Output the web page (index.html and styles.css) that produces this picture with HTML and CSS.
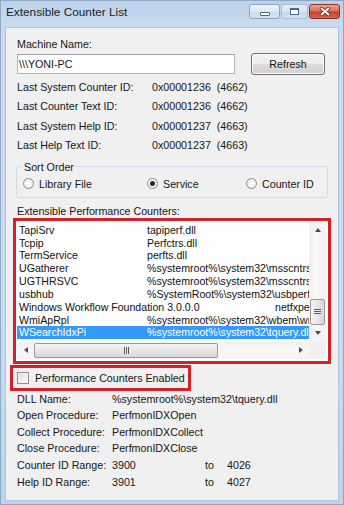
FILE: index.html
```html
<!DOCTYPE html>
<html>
<head>
<meta charset="utf-8">
<title>Extensible Counter List</title>
<link rel="stylesheet" href="styles.css">
</head>
<body>
<div class="window">
  <div class="titlebar">
    <span class="title">Extensible Counter List</span>
    <div class="caption">
      <span class="cbtn cmin"><span class="min-glyph"></span></span>
      <span class="cbtn cmax"><span class="max-glyph"></span></span>
      <span class="cbtn cclose"><svg width="12" height="9" viewBox="0 0 12 9"><path d="M2.5 1.5 L9.5 7.5 M9.5 1.5 L2.5 7.5" stroke="#5a1a12" stroke-width="3.4" stroke-linecap="round"/><path d="M2.5 1.5 L9.5 7.5 M9.5 1.5 L2.5 7.5" stroke="#fff" stroke-width="2" stroke-linecap="round"/></svg></span>
    </div>
  </div>
  <div class="client">
    <div class="lbl-top">Machine Name:</div>
    <div class="machine-row">
      <div class="textbox">\\\YONI-PC</div>
      <div class="button">Refresh</div>
    </div>
    <div class="ids">
      <span>Last System Counter ID:</span><span class="val">0x00001236  (4662)</span>
      <span>Last Counter Text ID:</span><span class="val">0x00001236  (4662)</span>
      <span>Last System Help ID:</span><span class="val">0x00001237  (4663)</span>
      <span>Last Help Text ID:</span><span class="val">0x00001237  (4663)</span>
    </div>
    <fieldset class="group">
      <legend>Sort Order</legend>
      <div class="radios">
        <span class="radio"><span class="rcircle"></span>Library File</span>
        <span class="radio"><span class="rcircle checked"></span>Service</span>
        <span class="radio"><span class="rcircle"></span>Counter ID</span>
      </div>
    </fieldset>
    <div class="lbl-list">Extensible Performance Counters:</div>
    <div class="list-red">
      <div class="listbox">
        <div class="list-main">
          <div class="rows">
            <div class="row">TapiSrv&#9;tapiperf.dll</div>
            <div class="row">Tcpip&#9;Perfctrs.dll</div>
            <div class="row">TermService&#9;perfts.dll</div>
            <div class="row">UGatherer&#9;%systemroot%\system32\msscntrs.dll</div>
            <div class="row">UGTHRSVC&#9;%systemroot%\system32\msscntrs.dll</div>
            <div class="row">usbhub&#9;%SystemRoot%\system32\usbperf.dll</div>
            <div class="row">Windows Workflow Foundation 3.0.0.0&#9;netfxperf.dll</div>
            <div class="row">WmiApRpl&#9;%systemroot%\system32\wbem\wmiaprpl.dll</div>
            <div class="row sel">WSearchIdxPi&#9;%systemroot%\system32\tquery.dll</div>
          </div>
          <div class="vscroll">
            <span class="sbtn"><span class="tri-up"></span></span>
            <span class="vtrack"><span class="vthumb"><span class="grip-v"></span></span></span>
            <span class="sbtn"><span class="tri-down"></span></span>
          </div>
        </div>
        <div class="hscroll-row">
          <div class="hscroll">
            <span class="sbtn"><span class="tri-left"></span></span>
            <span class="htrack"><span class="hthumb"><span class="grip-h"></span></span></span>
            <span class="sbtn"><span class="tri-right"></span></span>
          </div>
          <div class="corner"></div>
        </div>
      </div>
    </div>
    <div class="check-red">
      <span class="checkbox"></span><span>Performance Counters Enabled</span>
    </div>
    <div class="details">
      <span>DLL Name:</span><span class="span3">%systemroot%\system32\tquery.dll</span>
      <span>Open Procedure:</span><span class="span3">PerfmonIDXOpen</span>
      <span>Collect Procedure:</span><span class="span3">PerfmonIDXCollect</span>
      <span>Close Procedure:</span><span class="span3">PerfmonIDXClose</span>
      <span>Counter ID Range:</span><span>3900</span><span>to</span><span>4026</span>
      <span>Help ID Range:</span><span>3901</span><span>to</span><span>4027</span>
    </div>
  </div>
</div>
</body>
</html>
```

FILE: styles.css
```css
* { box-sizing: border-box; }
html, body { margin: 0; padding: 0; }
body {
  width: 344px;
  height: 505px;
  overflow: hidden;
  font-family: "Liberation Sans", Arial, sans-serif;
  font-size: 10.7px;
  color: #161616;
  background: #ffffff;
}
.window {
  width: 344px;
  height: 505px;
  display: flex;
  flex-direction: column;
  border: 1px solid #8ea9c6;
  background: linear-gradient(to bottom, #bcd1e9 0, #cadcf0 26px, #c9dbef 60%, #bfd4ea 100%);
}
.titlebar {
  height: 26px;
  display: flex;
  align-items: flex-start;
  flex: none;
}
.title {
  margin-top: 4px;
  padding-left: 5px;
  font-size: 11.8px;
  line-height: 14px;
  color: #141c26;
}
.caption {
  margin-left: auto;
  margin-top: 3px;
  padding-right: 3px;
  display: flex;
  gap: 1px;
}
.cbtn {
  height: 15px;
  display: flex;
  align-items: center;
  justify-content: center;
  border-radius: 3px;
}
.cmin {
  width: 31px;
  border: 1px solid #8fa3bd;
  background: linear-gradient(to bottom, #eef4fb 0, #dce7f4 50%, #cbdbee 51%, #d6e4f3 100%);
  align-items: flex-end;
  padding-bottom: 2px;
}
.min-glyph {
  width: 10px;
  height: 4px;
  background: #ffffff;
  border: 1px solid #4f6580;
  border-radius: 1px;
}
.cmax {
  width: 27px;
  border: 1px solid #a9bdd5;
  background: linear-gradient(to bottom, #e6eef8 0, #d6e3f2 50%, #c8d9ee 51%, #d2e0f1 100%);
}
.max-glyph {
  width: 9px;
  height: 7px;
  border: 1px solid #4f6580;
  border-top-width: 2px;
  background: #ffffff;
}
.cclose {
  width: 31px;
  border: 1px solid #8b3226;
  background: linear-gradient(to bottom, #eba394 0, #d9705e 45%, #c8432f 55%, #d4644c 100%);
}
.client {
  flex: 1;
  margin: 0 4px 3px 4px;
  border: 1px solid #b3c5da;
  background: #f0f0f0;
  padding: 9px 11px 0 11px;
  display: flex;
  flex-direction: column;
}
.lbl-top { line-height: 14px; }
.machine-row {
  margin-top: 2px;
  height: 22px;
  display: flex;
  align-items: center;
  justify-content: space-between;
  padding-right: 2px;
}
.textbox {
  width: 218px;
  height: 20px;
  border: 1px solid #b3b7bf;
  border-top-color: #9ea2aa;
  background: #ffffff;
  padding-left: 1px;
  line-height: 18px;
  white-space: pre;
}
.button {
  width: 74px;
  height: 22px;
  border: 1px solid #707070;
  border-radius: 3px;
  background: linear-gradient(to bottom, #f3f3f3 0, #ebebeb 50%, #dddddd 51%, #d0d0d0 100%);
  box-shadow: inset 0 0 0 1px #fbfbfb;
  text-align: center;
  line-height: 20px;
}
.ids {
  margin-top: 3px;
  display: grid;
  grid-template-columns: 135px auto;
  line-height: 19.3px;
}
.val { white-space: pre; }
.group {
  margin: 4.5px -1px 0 -1px;
  padding: 0 5px 6px 5px;
  border: 1px solid #d3dbe2;
  border-radius: 3px;
  min-width: 0;
}
.group legend {
  padding: 0 2px;
  line-height: 14px;
}
.radios {
  margin-top: 3px;
  margin-left: 1px;
  display: grid;
  grid-template-columns: 124px 99px auto;
  line-height: 14px;
}
.radio {
  display: flex;
  align-items: center;
  gap: 5px;
}
.rcircle {
  width: 11px;
  height: 11px;
  border-radius: 50%;
  border: 1px solid #8b8d8f;
  background: radial-gradient(circle at 50% 50%, #ffffff 0, #f4f4f4 50%, #dcdcdc 100%);
  display: flex;
  align-items: center;
  justify-content: center;
}
.rcircle.checked::after {
  content: "";
  width: 5px;
  height: 5px;
  border-radius: 50%;
  background: #262a2e;
}
.lbl-list {
  margin-top: 7px;
  line-height: 13px;
}
.list-red {
  margin: 0 -4px;
  height: 146px;
  border: 3px solid #d3212b;
  flex: none;
}
.listbox {
  height: 100%;
  background: #ffffff;
  padding: 1px 2px 2px 1px;
}
.list-main {
  height: 120px;
  display: flex;
}
.rows {
  flex: 1;
  min-width: 0;
  overflow: hidden;
  padding-top: 2px;
}
.row {
  white-space: pre;
  tab-size: 128px;
  -moz-tab-size: 128px;
  line-height: 12.85px;
  height: 12.85px;
  padding-left: 2px;
  overflow: hidden;
  font-size: 10.6px;
  color: #111111;
}
.row.sel {
  background: #3399ff;
  color: #ffffff;
}
.vscroll {
  width: 17px;
  display: flex;
  flex-direction: column;
  background: linear-gradient(to right, #efefef, #f7f7f7 40%, #f4f4f4);
}
.sbtn {
  width: 17px;
  height: 17px;
  flex: none;
  display: flex;
  align-items: center;
  justify-content: center;
}
.vtrack {
  flex: 1;
  display: flex;
  flex-direction: column;
  justify-content: flex-end;
}
.vthumb {
  height: 26px;
  margin: 0 1px;
  border: 1px solid #9a9a9a;
  border-radius: 2px;
  background: linear-gradient(to right, #f4f4f4, #e6e6e6 50%, #d6d6d6);
  display: flex;
  align-items: center;
  justify-content: center;
}
.grip-v {
  width: 7px;
  height: 5px;
  background: repeating-linear-gradient(to bottom, #5a5a5a 0 1px, #f0f0f0 1px 2px);
}
.hscroll-row {
  height: 17px;
  display: flex;
}
.hscroll {
  flex: 1;
  display: flex;
  background: linear-gradient(to bottom, #efefef, #f7f7f7 40%, #f4f4f4);
}
.htrack {
  flex: 1;
  display: flex;
}
.hthumb {
  width: 184px;
  margin: 1px 0;
  border: 1px solid #9a9a9a;
  border-radius: 2px;
  background: linear-gradient(to bottom, #f4f4f4, #e6e6e6 50%, #d6d6d6);
  display: flex;
  align-items: center;
  justify-content: center;
}
.grip-h {
  width: 5px;
  height: 7px;
  background: repeating-linear-gradient(to right, #5a5a5a 0 1px, #f0f0f0 1px 2px);
}
.corner {
  width: 17px;
  background: #f0f0f0;
}
.tri-up, .tri-down, .tri-left, .tri-right { width: 0; height: 0; }
.tri-up { border-left: 3.5px solid transparent; border-right: 3.5px solid transparent; border-bottom: 4px solid #4a4a4a; }
.tri-down { border-left: 3.5px solid transparent; border-right: 3.5px solid transparent; border-top: 4px solid #4a4a4a; }
.tri-left { border-top: 3.5px solid transparent; border-bottom: 3.5px solid transparent; border-right: 4px solid #4a4a4a; }
.tri-right { border-top: 3.5px solid transparent; border-bottom: 3.5px solid transparent; border-left: 4px solid #4a4a4a; }
.check-red {
  margin: 1px 0 0 -7px;
  width: 181px;
  height: 26px;
  border: 3px solid #d3212b;
  display: flex;
  align-items: center;
  gap: 6px;
  padding-left: 4px;
  flex: none;
}
.checkbox {
  width: 12px;
  height: 12px;
  border: 1px solid #8e8f8f;
  background: linear-gradient(135deg, #dcdcdc, #fbfbfb);
  box-shadow: inset 0 0 0 1px #f4f4f4;
}
.details {
  display: grid;
  grid-template-columns: 95px 93px 22px auto;
  line-height: 16.6px;
}
.span3 { grid-column: 2 / 5; white-space: nowrap; }
```
